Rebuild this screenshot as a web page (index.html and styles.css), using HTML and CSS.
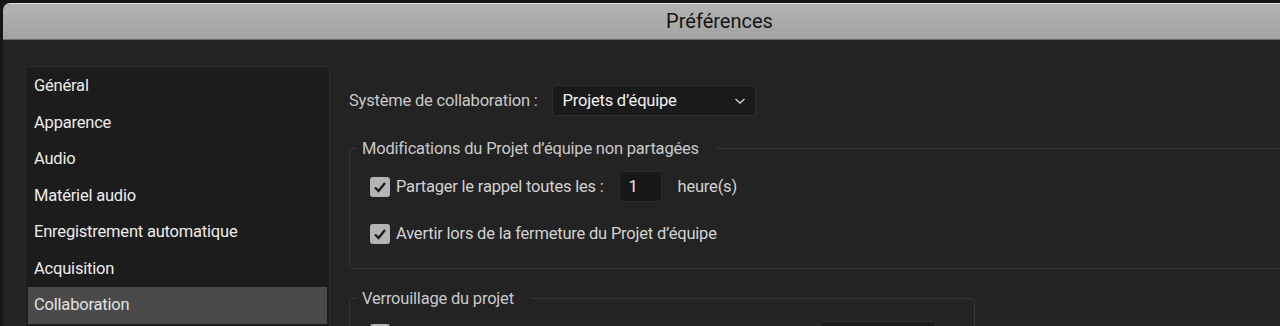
FILE: index.html
```html
<!DOCTYPE html>
<html lang="fr">
<head>
  <meta charset="utf-8">
  <title>Préférences</title>
  <link rel="stylesheet" href="styles.css">
</head>
<body>
  <div class="window">
    <header class="titlebar">Préférences</header>

    <div class="content">
      <!-- categories -->
      <ul class="sidebar">
        <li>Général</li>
        <li>Apparence</li>
        <li>Audio</li>
        <li>Matériel audio</li>
        <li>Enregistrement automatique</li>
        <li>Acquisition</li>
        <li class="active">Collaboration</li>
      </ul>

      <!-- collaboration panel -->
      <section class="panel">
        <div class="row">
          <span class="label">Système de collaboration :</span>
          <div class="select">
            <span>Projets d’équipe</span>
            <svg class="chev" width="12" height="8" viewBox="0 0 12 8"><path d="M1.5 2 L6 6 L10.5 2" fill="none" stroke="#d0d0d0" stroke-width="1.4"/></svg>
          </div>
        </div>

        <fieldset class="group wide">
          <legend>Modifications du Projet d’équipe non partagées</legend>
          <div class="check">
            <span class="box"><svg width="20" height="20" viewBox="0 0 20 20"><path d="M5 10.5 L8.5 14 L15 6" fill="none" stroke="#1e1e1e" stroke-width="2.4"/></svg></span>
            <span class="text">Partager le rappel toutes les :</span>
            <span class="num">1</span>
            <span class="text">heure(s)</span>
          </div>
          <div class="check">
            <span class="box"><svg width="20" height="20" viewBox="0 0 20 20"><path d="M5 10.5 L8.5 14 L15 6" fill="none" stroke="#1e1e1e" stroke-width="2.4"/></svg></span>
            <span class="text">Avertir lors de la fermeture du Projet d’équipe</span>
          </div>
        </fieldset>

        <fieldset class="group lock">
          <legend>Verrouillage du projet</legend>
          <div class="check low">
            <span class="box"></span>
            <span class="field"></span>
          </div>
        </fieldset>
      </section>
    </div>
  </div>
</body>
</html>
```

FILE: styles.css
```css
/* RESET */
* { box-sizing:border-box; margin:0; padding:0; }
html, body { height:100%; overflow:hidden; }
body {
  background:#161616;
  font-family:Roboto, "Noto Sans", sans-serif;
  padding:3px 0 0 3px;
}

/* WINDOW */
.window {
  width:1433px; height:400px;
  background:#232323;
  border-radius:7px 7px 0 0;
  overflow:hidden;
}
.titlebar {
  height:37px;
  border-top:1px solid #e2e2e2;
  border-bottom:1px solid #6c6c6c;
  background:linear-gradient(#b3b3b3, #a2a2a2);
  color:#151515;
  font-size:20px; line-height:35px;
  text-align:center;
}

/* LAYOUT */
.content {
  display:flex; gap:19px;
  padding:26px 0 0 22px;
}

/* SIDEBAR */
.sidebar {
  list-style:none;
  width:305px; height:300px;
  background:#1c1c1c;
  border:1px solid #2c2c2c;
  border-radius:3px;
  padding:1px 2px 0;
}
.sidebar li {
  height:36.5px; line-height:36.5px;
  padding-left:6px;
  color:#ececec;
  font-size:16.5px; letter-spacing:-.2px;
}
.sidebar li.active { background:#4a4a4a; color:#e2e2e2; }

/* PANEL */
.panel { flex:1; color:#c9c9c9; font-size:16.5px; letter-spacing:-.2px; }
.row {
  display:flex; align-items:center; gap:14px;
  height:31px; margin-top:19px;
}
.select {
  display:flex; align-items:center; justify-content:space-between;
  width:204px; height:31px;
  padding:0 9px 0 10px;
  background:#1a1a1a;
  border:1px solid #2f2f2f; border-radius:3px;
  color:#f2f2f2;
}
.chev { margin-top:1px; }

/* GROUPS */
.group {
  border:1px solid #363636;
  border-radius:4px;
  padding:0 0 0 20px;
}
.group legend {
  margin-left:-13px;
  padding:0 17px 0 5px;
  color:#c9c9c9;
}
.group.wide { width:1060px; height:130px; margin-top:23px; padding-top:13px; }
.group.lock { width:626px; height:80px; margin-top:20px; padding-top:13px; }

.check {
  display:flex; align-items:center;
  height:31px; margin-bottom:16px;
  color:#d2d2d2;
}
.check.low { align-items:flex-start; }
.box {
  width:20px; height:20px;
  background:#b4b4b4;
  border-radius:3px;
  margin-right:6px;
}
.low .box { margin-top:3px; }
.box svg { display:block; }
.num {
  width:43px; height:31px;
  margin:0 16px 0 15px;
  padding-left:9px; line-height:29px;
  background:#171717;
  border:1px solid #2c2c2c; border-radius:3px;
  color:#e8e8e8;
}
.field {
  width:116px; height:31px;
  margin-left:424px;
  background:#1a1a1a;
  border:1px solid #2f2f2f; border-radius:3px;
}
```
